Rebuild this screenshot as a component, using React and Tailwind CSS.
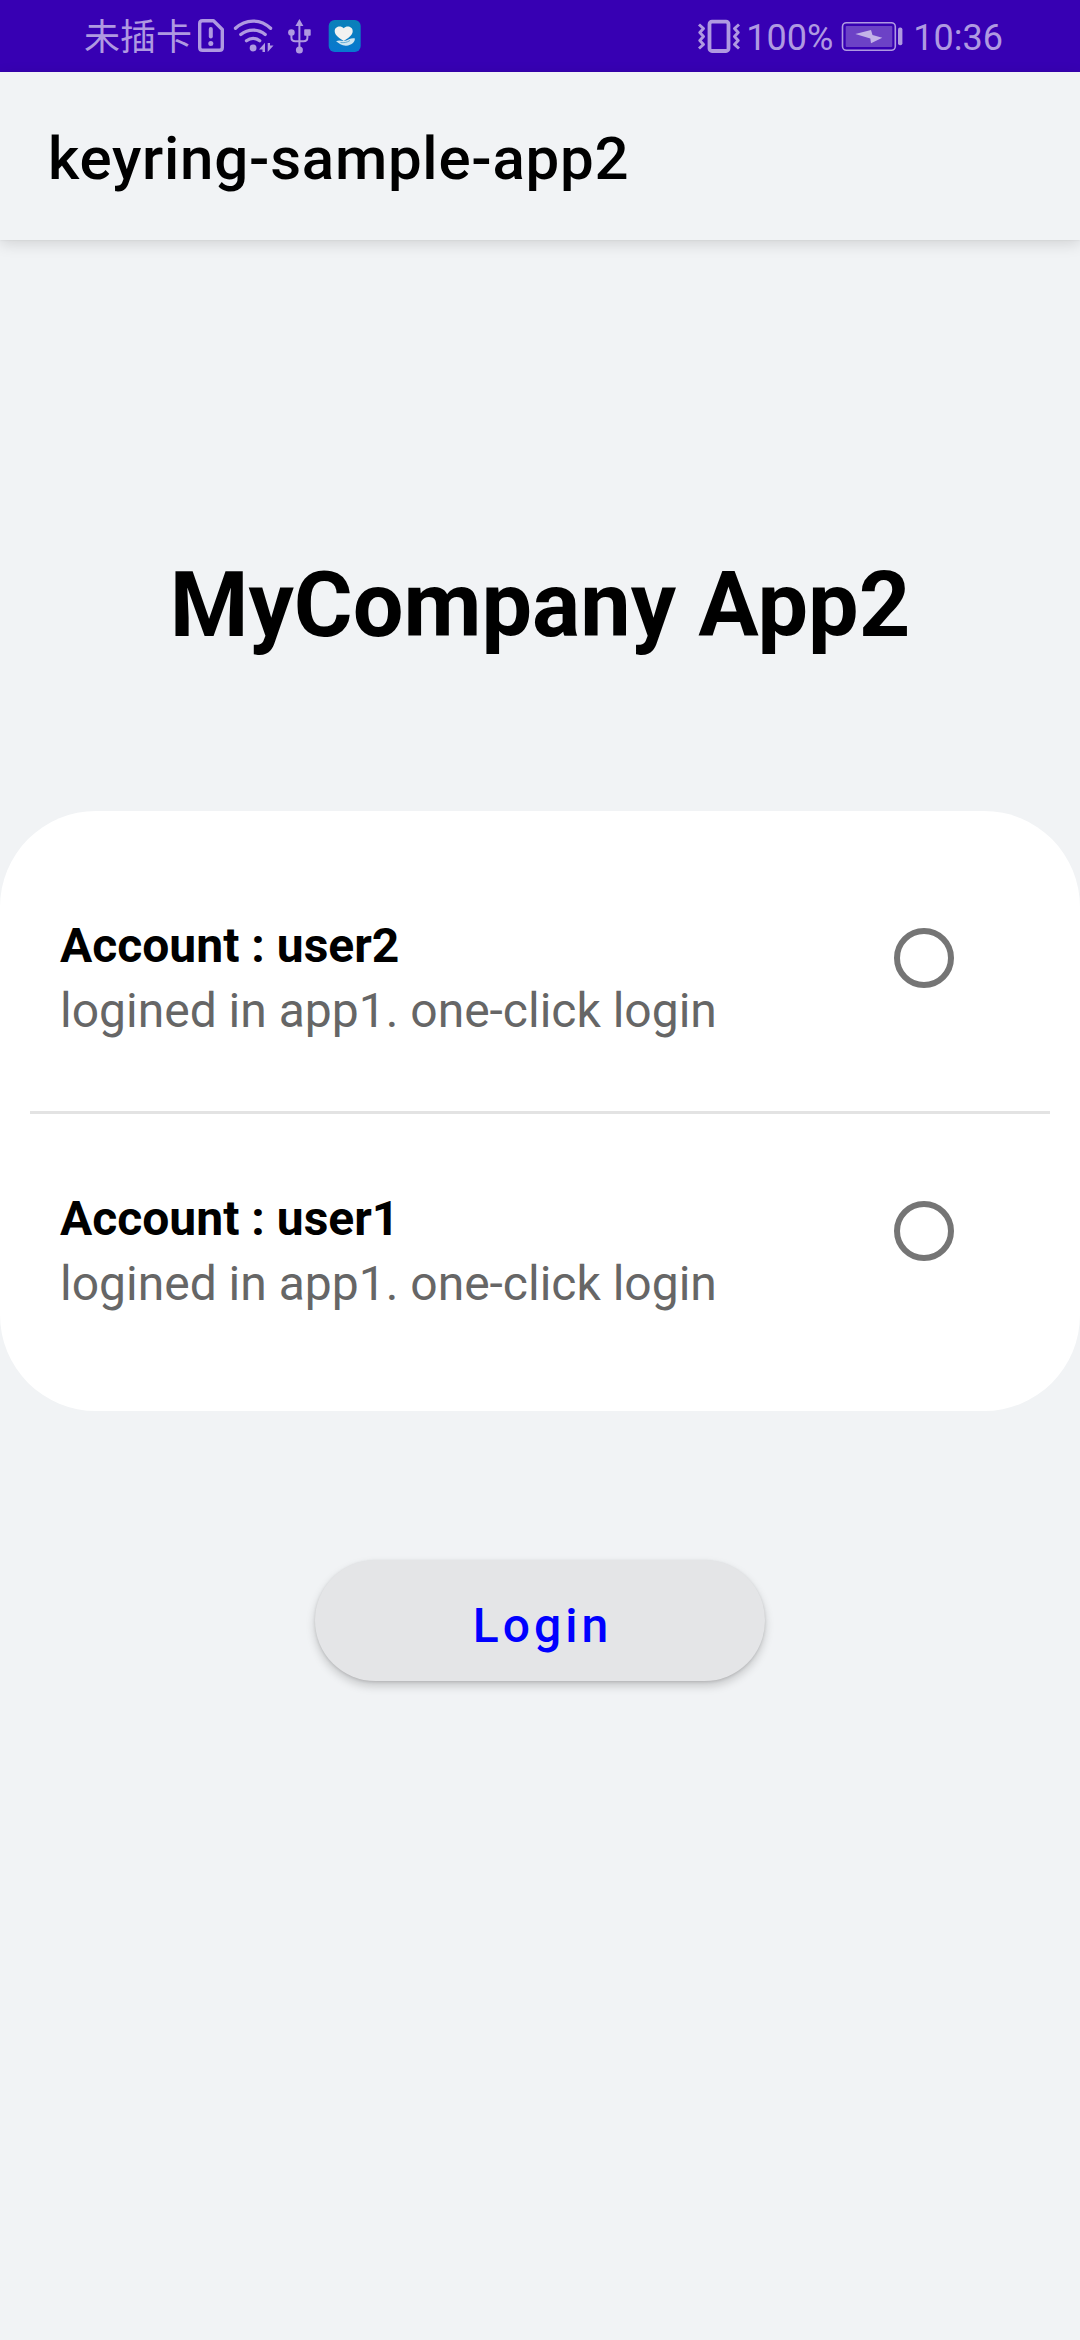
const SimAlert = () => (
  <svg className="ml-[7px] h-[72px] w-[28px]" viewBox="197 0 28 72" fill="none" stroke="#af99e1">
    <path d="M202.500 20.700H213.500L222.300 29.500V47.500Q222.300 50.300 219.500 50.300H202.500Q199.700 50.300 199.700 47.500V23.500Q199.700 20.700 202.500 20.700Z" strokeWidth="3.4" strokeLinejoin="round" />
    <path d="M210.800 29V36.500" strokeWidth="4" strokeLinecap="round" />
    <circle cx="210.800" cy="43.500" r="2.500" fill="#af99e1" stroke="none" />
  </svg>
);

const Wifi = () => (
  <svg className="ml-[8px] h-[72px] w-[42px]" viewBox="233 0 42 72" fill="none" stroke="#af99e1" strokeWidth="3.300" strokeLinecap="round">
    <path d="M235.500 28.300C245.500 18.600 260.500 18.600 270.600 28.300" />
    <path d="M240.800 34.500C248 28.600 258.200 28.600 265.200 34.500" />
    <path d="M246.500 40.800C250.500 37.700 255.800 37.700 259.700 40.800" />
    <circle cx="253.100" cy="48" r="3.400" fill="#af99e1" stroke="none" />
    <path d="M265 42.700V52H262.500V49.500H259Z" fill="#af99e1" stroke="none" />
    <path d="M267.700 52V43H270V45.500H273.500Z" fill="#af99e1" stroke="none" />
  </svg>
);

const Usb = () => (
  <svg className="ml-[12px] h-[72px] w-[26px]" viewBox="287 0 26 72" fill="none" stroke="#af99e1" strokeWidth="2">
    <path d="M299.400 24V50" />
    <path d="M291.400 33V37.500Q291.400 41.300 295.200 41.300H303.600Q307.400 41.300 307.400 37.500V33" />
    <path d="M299.400 19L303.400 26H295.400Z" fill="#af99e1" stroke="none" />
    <circle cx="291.400" cy="32.500" r="3.300" fill="#af99e1" stroke="none" />
    <rect x="304.200" y="29.300" width="6.500" height="6.500" rx="0.800" fill="#af99e1" stroke="none" />
    <circle cx="299.400" cy="50" r="3.500" fill="#af99e1" stroke="none" />
  </svg>
);

const HealthApp = () => (
  <svg className="ml-[15px] h-[72px] w-[34px]" viewBox="328 0 34 72">
    <defs>
      <linearGradient id="tile" x1="0" y1="0" x2="0" y2="1">
        <stop offset="0" stopColor="#0a80b8" />
        <stop offset="1" stopColor="#0878d0" />
      </linearGradient>
    </defs>
    <rect x="328.700" y="20" width="32" height="32" rx="6" fill="url(#tile)" />
    <path d="M343.700 41C340 38.500 334.700 35.500 334.700 31.200C334.700 26.300 341 25.300 343.700 28.300C346.400 25.300 352.700 26.300 352.700 31.200C352.700 35.500 347.500 38.500 343.700 41Z" fill="#f1f1f1" />
    <path d="M336 41.500C339 39.500 342 41.500 345 40.800C348 40 351 37.500 354.700 38.300C355.700 41 352 45.500 346 45.700C341.500 45.700 339 43 336 41.500Z" fill="#cfe5f1" />
    <path d="M340.500 42.500C344 43 347 42.500 350 40.500" fill="none" stroke="#4b9fce" strokeWidth="0.800" />
  </svg>
);

const Vibrate = () => (
  <svg className="h-[72px] w-[44px]" viewBox="697 0 44 72" fill="none" stroke="#af99e1">
    <rect x="709.500" y="21.700" width="19" height="29.300" rx="2.500" strokeWidth="3.800" />
    <g strokeWidth="3" strokeLinejoin="round">
      <path d="M699 24.500L703.500 28.500L699.800 32.500L703.500 36.500L699.800 40.500L703.500 44.500L699 48.500" />
      <path d="M739 24.500L734.500 28.500L738.200 32.500L734.500 36.500L738.200 40.500L734.500 44.500L739 48.500" />
    </g>
  </svg>
);

const Battery = () => (
  <svg className="ml-[8px] mr-[9px] h-[72px] w-[63px]" viewBox="841 0 63 72" fill="none">
    <rect x="842.500" y="22.700" width="52.800" height="27.600" rx="4" stroke="#af99e1" strokeWidth="1.600" />
    <rect x="845.700" y="26" width="46.600" height="21" rx="1" fill="#6c42c6" />
    <path d="M855.300 34L871 30L872.500 35L882.300 37.800L871 43.300L870.300 38.500Z" fill="#c3b3e8" />
    <rect x="898" y="27.500" width="4.400" height="17.800" rx="2" fill="#af99e1" />
  </svg>
);

const StatusBar = () => (
  <div className="flex h-[72px] items-center justify-between bg-[#3700b3] pr-[77px] pl-[84px] text-[36px] text-[#af99e1]">
    <div className="flex items-center">
      <span className="w-[106px] pt-1 whitespace-nowrap">未插卡</span>
      <SimAlert />
      <Wifi />
      <Usb />
      <HealthApp />
    </div>
    <div className="flex items-center">
      <Vibrate />
      <span className="ml-[5px] pt-1">100%</span>
      <Battery />
      <span className="pt-1">10:36</span>
    </div>
  </div>
);

function Account({ name }) {
  return (
    <div className="flex h-[270px] shrink-0 justify-between pl-[60px] pr-[126px]">
      <div className="pt-[72px] text-[48px] leading-[65px]">
        <div className="font-bold text-black">Account : {name}</div>
        <div className="text-[#666666]">logined in app1. one-click login</div>
      </div>
      <span className="mt-[87px] h-[60px] w-[60px] rounded-full border-[6px] border-[#757575]" />
    </div>
  );
}

export default function App() {
  return (
    <div className="flex h-[2340px] w-[1080px] flex-col bg-[#f1f3f5] font-[Roboto,'Noto_Sans_CJK_SC',sans-serif]">
      <StatusBar />
      <header className="flex h-[168px] items-center pt-[5px] pl-[48px] text-[60px] font-medium tracking-[0.75px] text-black shadow-[0_0_2px_rgba(0,0,0,0.08),0_4px_14px_rgba(0,0,0,0.13)]">
        keyring-sample-app2
      </header>
      <h1 className="mt-[303px] text-center text-[90px] leading-[126px] font-bold text-black">MyCompany App2</h1>
      <main className="mt-[142px] flex h-[600px] shrink-0 flex-col rounded-[96px] bg-white pt-[30px]">
        <Account name="user2" />
        <div className="mx-[30px] h-[3px] shrink-0 bg-[#e3e3e3]" />
        <Account name="user1" />
      </main>
      <button className="mx-auto mt-[149px] h-[121px] w-[450px] shrink-0 rounded-full bg-[#e4e5e7] pt-[11px] pl-[5px] text-[48px] font-medium tracking-[4px] text-[#0000ff] shadow-[0_1px_3px_rgba(0,0,0,0.12),0_5px_10px_rgba(0,0,0,0.18)]">
        Login
      </button>
    </div>
  );
}
